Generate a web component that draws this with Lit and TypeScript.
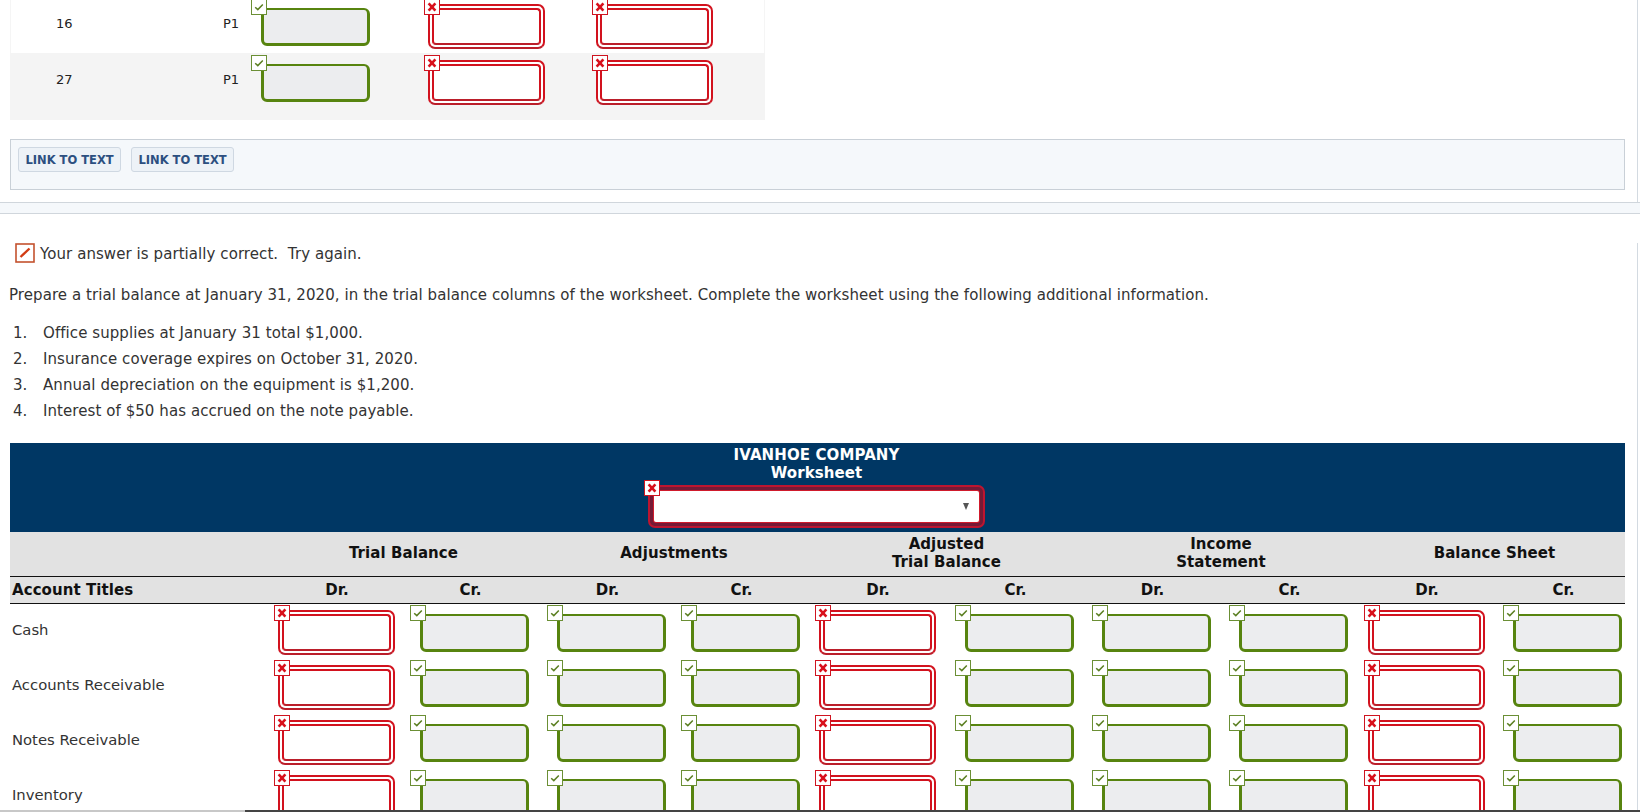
import { LitElement, html, css, svg } from "lit";
import { customElement } from "lit/decorators.js";

const crossIcon = svg`<path d="M4.6 4.4 L11.4 11.6 M11.4 4.4 L4.6 11.6" stroke="#d8101c" stroke-width="2.6" fill="none"/>`;
const checkIcon = svg`<path d="M4.2 8.2 L6.8 10.6 L11.8 5.4" stroke="#5b7f22" stroke-width="1.5" fill="none"/>`;

const ROWS = ["Cash", "Accounts Receivable", "Notes Receivable", "Inventory"];
const PATTERN = ["x", "c", "c", "c", "x", "c", "c", "c", "x", "c"];

@customElement("app-root")
export class AppRoot extends LitElement {
  static styles = css`
    :host {
      display: block;
      position: relative;
      height: 812px;
      overflow: hidden;
      background: #fff;
      font-family: "DejaVu Sans", Verdana, sans-serif;
      color: #333;
    }
    .upper {
      width: 1637px;
      height: 202px;
      border-right: 1px solid #d3dae1;
      box-sizing: content-box;
      overflow: hidden;
    }
    .top-table {
      margin: -2px 0 0 10px;
      width: 755px;
      font-size: 13px;
      color: #222;
    }
    .top-row {
      display: grid;
      grid-template-columns: 205px 36px 173px 168px 1fr;
      height: 55px;
      box-sizing: border-box;
      box-shadow: inset 1px 0 #f5f5f5, inset -1px 0 #f5f5f5;
    }
    .top-row.alt {
      background: #f4f4f4;
      height: 67px;
      padding-top: 1px;
      box-shadow: none;
    }
    .top-num {
      padding: 19px 0 0 46px;
      line-height: 14px;
    }
    .top-code {
      padding: 19px 0 0 8px;
      line-height: 14px;
    }
    .panel {
      margin: 19px 0 0 10px;
      width: 1615px;
      height: 51px;
      box-sizing: border-box;
      border: 1px solid #c9d0d7;
      background: #f5f8fb;
      padding: 7px;
      display: flex;
      gap: 10px;
      align-items: flex-start;
    }
    .link-btn {
      width: 103px;
      height: 25px;
      box-sizing: border-box;
      border: 1px solid #cfd8e2;
      border-radius: 3px;
      background: #edf2f7;
      color: #2c4f80;
      font-size: 11.5px;
      font-weight: bold;
      display: flex;
      align-items: center;
      justify-content: center;
    }
    .band {
      height: 10px;
      background: #f5f8fb;
      border-top: 1px solid #d0d6dc;
      border-bottom: 1px solid #d0d6dc;
    }
    .lower {
      width: 1637px;
      border-right: 1px solid #d3dae1;
      height: 598px;
      font-size: 15px;
      letter-spacing: 0.07px;
    }
    .status {
      margin: 29px 0 0 15px;
      display: flex;
      align-items: center;
      gap: 5px;
      height: 20px;
      white-space: pre;
    }
    .status span {
      padding-top: 2px;
    }
    .status svg {
      display: block;
    }
    .intro {
      margin: 22px 0 0 9px;
      line-height: 20px;
    }
    .steps {
      margin: 15px 0 0 13px;
      padding: 0;
      list-style: none;
      line-height: 26px;
    }
    .steps li {
      display: flex;
    }
    .steps .n {
      width: 30px;
    }
    .navy {
      margin: 19px 0 0 10px;
      width: 1615px;
      height: 89px;
      background: #003764;
      color: #fff;
      font-weight: bold;
      font-size: 15px;
      line-height: 18px;
      letter-spacing: 0.1px;
      text-align: center;
      padding-top: 3px;
      box-sizing: border-box;
      display: flex;
      flex-direction: column;
      align-items: center;
    }
    .navy-title {
      margin-left: -2px;
    }
    .select {
      position: relative;
      margin: 3px 0 0 -2px;
      width: 337px;
      height: 43px;
      box-sizing: border-box;
      border: 2px solid #bd1530;
      border-radius: 7px;
      background: #761a36;
      padding: 4px;
    }
    .select-inner {
      height: 31px;
      background: #fff;
      border-radius: 2px;
      box-shadow: 0 0 0 1px #d01a2c;
      display: flex;
      align-items: center;
      justify-content: flex-end;
      padding-right: 10px;
    }
    .arrow {
      width: 0;
      height: 0;
      border-left: 3.5px solid transparent;
      border-right: 3.5px solid transparent;
      border-top: 7px solid #555;
    }
    .select .badge {
      left: -6px;
      top: -7px;
    }
    .ws {
      margin-left: 10px;
      width: 1615px;
    }
    .cols {
      display: grid;
      grid-template-columns: 264px 136px 137px 134px 134px 140px 137px 137px 135px 139px 122px;
    }
    .head {
      background: #e2e2e2;
      color: #111;
      font-weight: bold;
      font-size: 15px;
    }
    .head-1 {
      height: 45px;
      border-bottom: 1px solid #111;
      box-sizing: border-box;
      line-height: 18px;
      text-align: center;
    }
    .head-1 > div {
      grid-column: span 2;
      display: flex;
      align-items: center;
      justify-content: center;
      padding: 0 14px 2px 0;
    }
    .head-1 > div.blank {
      grid-column: span 1;
      padding: 0;
    }
    .head-1 > div.last {
      padding-right: 0;
    }
    .head-2 {
      height: 27px;
      border-bottom: 1px solid #111;
      box-sizing: border-box;
      line-height: 26px;
    }
    .head-2 .title {
      padding-left: 2px;
    }
    .slot {
      width: 121px;
      text-align: center;
    }
    .slot.wide {
      width: 126px;
    }
    .row {
      height: 55px;
    }
    .label {
      padding: 16px 0 0 2px;
      line-height: 20px;
      font-size: 14.8px;
      letter-spacing: 0;
    }
    .field {
      position: relative;
      box-sizing: border-box;
    }
    .ok {
      width: 109px;
      height: 38px;
      margin: 10px 0 0 10px;
      background: #ecedef;
      border: 2px solid #57840f;
      border-left-width: 3px;
      border-bottom-width: 3px;
      border-right-width: 3px;
      border-radius: 6px;
    }
    .ok .badge {
      left: -13px;
      top: -11px;
    }
    .bad {
      width: 117px;
      height: 45px;
      margin: 6px 0 0 4px;
      background: #fff;
      border: 2px solid #d2121e;
      border-bottom-color: #bb1e2a;
      border-radius: 7px;
      padding: 2px;
    }
    .bad-inner {
      width: 100%;
      height: 100%;
      box-sizing: border-box;
      border: 2px solid #d2121e;
      border-bottom-color: #bb1e2a;
      border-radius: 4px;
      background: #fff;
    }
    .bad .badge {
      left: -6px;
      top: -7px;
    }
    .badge {
      position: absolute;
      width: 16px;
      height: 16px;
      box-sizing: border-box;
      background: #fff;
      z-index: 1;
    }
    .badge svg {
      display: block;
      margin: -1px;
    }
    .badge.x {
      border: 1px solid #cf1420;
    }
    .badge.c {
      border: 1px solid #6b8f35;
    }
    .scroll {
      position: absolute;
      left: 0;
      right: 0;
      bottom: 0;
      height: 2px;
      background: #444;
    }
    .scroll-start {
      width: 245px;
      height: 2px;
      background: #c8c8c8;
    }
  `;

  private badge(kind: string) {
    return html`<div class="badge ${kind}">
      <svg width="16" height="16" viewBox="0 0 16 16">${kind === "x" ? crossIcon : checkIcon}</svg>
    </div>`;
  }

  private field(kind: string) {
    return kind === "x"
      ? html`<div class="field bad">${this.badge("x")}<div class="bad-inner"></div></div>`
      : html`<div class="field ok">${this.badge("c")}</div>`;
  }

  render() {
    const heads = ["Dr.", "Cr.", "Dr.", "Cr.", "Dr.", "Cr.", "Dr.", "Cr.", "Dr.", "Cr."];
    return html`
      <div class="upper">
        <div class="top-table">
          <div class="top-row">
            <div class="top-num">16</div>
            <div class="top-code">P1</div>
            <div>${this.field("c")}</div>
            <div>${this.field("x")}</div>
            <div>${this.field("x")}</div>
          </div>
          <div class="top-row alt">
            <div class="top-num">27</div>
            <div class="top-code">P1</div>
            <div>${this.field("c")}</div>
            <div>${this.field("x")}</div>
            <div>${this.field("x")}</div>
          </div>
        </div>
        <div class="panel">
          <div class="link-btn">LINK TO TEXT</div>
          <div class="link-btn">LINK TO TEXT</div>
        </div>
      </div>
      <div class="band"></div>
      <div class="lower">
        <div class="status">
          <svg width="20" height="20" viewBox="0 0 20 20">
            <rect x="1" y="1" width="18" height="18" fill="#fff" stroke="#c4522e" stroke-width="1.6"/>
            <path d="M5.5 14 L14.5 5.5" stroke="#d23c14" stroke-width="2.4" fill="none"/>
          </svg>
          <span>Your answer is partially correct.  Try again.</span>
        </div>
        <div class="intro">Prepare a trial balance at January 31, 2020, in the trial balance columns of the worksheet. Complete the worksheet using the following additional information.</div>
        <ol class="steps">
          <li><span class="n">1.</span><span>Office supplies at January 31 total $1,000.</span></li>
          <li><span class="n">2.</span><span>Insurance coverage expires on October 31, 2020.</span></li>
          <li><span class="n">3.</span><span>Annual depreciation on the equipment is $1,200.</span></li>
          <li><span class="n">4.</span><span>Interest of $50 has accrued on the note payable.</span></li>
        </ol>
        <div class="navy">
          <div class="navy-title">IVANHOE COMPANY<br />Worksheet</div>
          <div class="select">
            ${this.badge("x")}
            <div class="select-inner"><div class="arrow"></div></div>
          </div>
        </div>
        <div class="ws">
          <div class="cols head head-1">
            <div class="blank"></div>
            <div>Trial Balance</div>
            <div>Adjustments</div>
            <div>Adjusted<br />Trial Balance</div>
            <div>Income<br />Statement</div>
            <div class="last">Balance Sheet</div>
          </div>
          <div class="cols head head-2">
            <div class="title">Account Titles</div>
            ${heads.map(
              (h, i) => html`<div><div class="slot ${PATTERN[i] === "x" ? "wide" : ""}">${h}</div></div>`
            )}
          </div>
          ${ROWS.map(
            (r) => html`<div class="cols row">
              <div class="label">${r}</div>
              ${PATTERN.map((k) => html`<div>${this.field(k)}</div>`)}
            </div>`
          )}
        </div>
      </div>
      <div class="scroll"><div class="scroll-start"></div></div>
    `;
  }
}
